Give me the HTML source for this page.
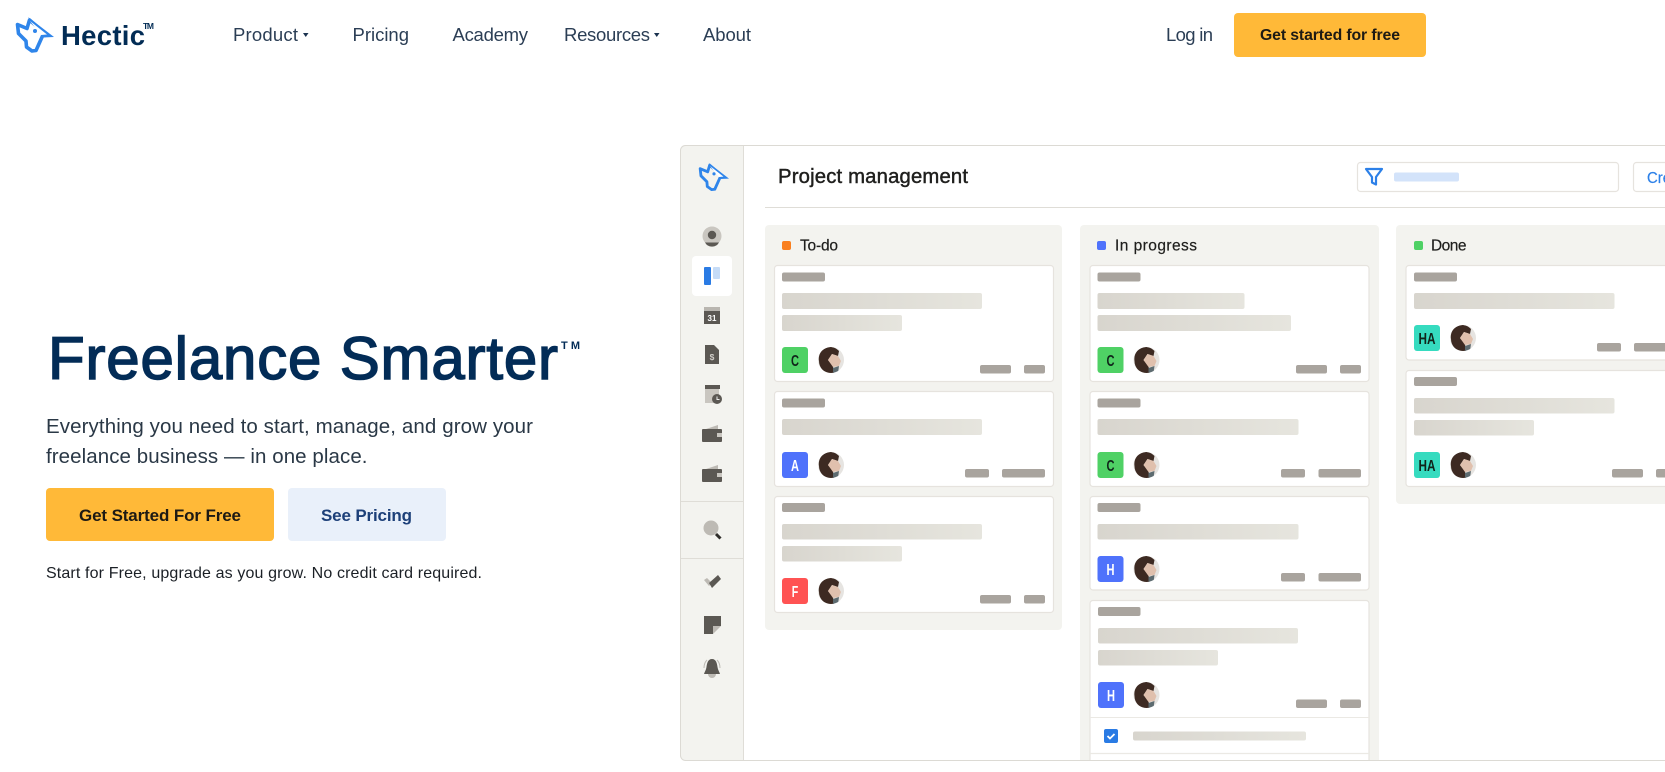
<!DOCTYPE html>
<html lang="en">
<head>
<meta charset="utf-8">
<title>Hectic - Freelance Smarter</title>
<style>
html,body{margin:0;padding:0;background:#fff;width:1665px;height:772px;overflow:hidden}
svg{display:block}
text{font-family:"Liberation Sans",sans-serif}
.nav{font-size:18.5px;fill:#2b3e55}
.l{fill:#a9a49e}
.b{fill:url(#g)}
.s{fill:#a9a49e}
.card{fill:#fff;stroke:#e6e3de;stroke-width:1.2}
.col{fill:#f3f3ef}
.line{stroke:#dfddd7;stroke-width:1}
.d{fill:#5b5853}
.m{fill:#bdbab4}
.t{font-size:15.5px;fill:#1f1f1d;stroke:#1f1f1d;stroke-width:.2}
.bd{font-size:16px;font-weight:700;text-anchor:middle}
</style>
</head>
<body>
<svg width="1665" height="772" viewBox="0 0 1665 772" xmlns="http://www.w3.org/2000/svg">
<defs>
<linearGradient id="g" x1="0" x2="1" y1="0" y2="0"><stop offset="0" stop-color="#d8d5ce"/><stop offset="1" stop-color="#e6e5de"/></linearGradient>
<clipPath id="frame"><rect x="680" y="145" width="985" height="615" rx="5"/></clipPath>
<clipPath id="av"><circle cx="13" cy="13" r="13"/></clipPath>
<symbol id="logo" viewBox="15 16 40 38" overflow="visible">
<path d="M17.5 24.5 L27 28.5 L29.5 20 L47 35 L42.5 36 L36 50.5 L32 51 L26.5 47 L26 41 L18.5 33.5 Z" fill="none" stroke="#2f85ea" stroke-width="3.6" stroke-linejoin="round"/>
<path d="M28 17 L54 37 L43 37.5 Z" fill="#2f85ea"/>
<path d="M30 21 L47 34.5 L41 35 Z" fill="#fff"/>
<circle cx="35" cy="31" r="2" fill="#2f85ea"/>
</symbol>
<g id="avatar" clip-path="url(#av)">
<rect width="26" height="26" fill="#e6e4e1"/>
<path d="M12 0 C4 1 0 7 1 14 C1 20 5 25 11 26 L16 26 L15 19 L10 13 L14 7 L20 9 L21 4 C18 1 15 0 12 0Z" fill="#3d2a22"/>
<path d="M10 13 L14 7 L20 9 L23 14 L21 19 L15 20Z" fill="#e0c0ad"/>
<path d="M15 21 L21 19 L20 26 L15 26Z" fill="#5d6b70"/>
</g>
</defs>

<!-- Header -->
<use href="#logo" x="15" y="16" width="40" height="38"/>
<text x="61" y="45" font-size="27.5" font-weight="700" fill="#022c55" textLength="84">Hectic</text>
<text x="143" y="29" font-size="8.5" font-weight="700" fill="#022c55" textLength="11">TM</text>
<text class="nav" x="233" y="41" textLength="65">Product</text>
<path d="M303 33 h5.5 l-2.75 4z" fill="#1b3350"/>
<text class="nav" x="352.5" y="41" textLength="56.5">Pricing</text>
<text class="nav" x="452.5" y="41" textLength="75.5">Academy</text>
<text class="nav" x="564" y="41" textLength="86">Resources</text>
<path d="M654 33 h5.5 l-2.75 4z" fill="#1b3350"/>
<text class="nav" x="703" y="41" textLength="48">About</text>
<text class="nav" x="1166" y="41" textLength="47">Log in</text>
<rect x="1234" y="13" width="192" height="44" rx="4" fill="#ffb938"/>
<text x="1260" y="40" font-size="15.8" font-weight="700" fill="#1d1a14" textLength="140">Get started for free</text>

<!-- Hero -->
<text x="48" y="379" font-size="60" fill="#032c57" stroke="#032c57" stroke-width="1.5" textLength="510">Freelance Smarter</text>
<text x="561" y="349" font-size="11" font-weight="700" fill="#032c57" textLength="19">TM</text>
<text x="46" y="433" font-size="20.5" fill="#2a3846" textLength="487">Everything you need to start, manage, and grow your</text>
<text x="46" y="463" font-size="20.5" fill="#2a3846" textLength="321.5">freelance business — in one place.</text>
<rect x="46" y="488" width="228" height="53" rx="4" fill="#ffb938"/>
<text x="79" y="521" font-size="17" font-weight="700" fill="#1d1a14" textLength="162">Get Started For Free</text>
<rect x="288" y="488" width="158" height="53" rx="4" fill="#e9f0fa"/>
<text x="321" y="521" font-size="17" font-weight="700" fill="#1d4079" textLength="91">See Pricing</text>
<text x="46" y="578" font-size="16" fill="#1b2026" textLength="436">Start for Free, upgrade as you grow. No credit card required.</text>

<!-- Mock -->
<g style="filter:blur(.35px)">
<g clip-path="url(#frame)">
<rect x="680" y="145" width="985" height="615" fill="#fff"/>
<rect x="680" y="145" width="64" height="615" fill="#f3f3ef"/>
<line x1="743.5" y1="145" x2="743.5" y2="760" class="line"/>
<line x1="680" y1="501.5" x2="743" y2="501.5" class="line"/>
<line x1="680" y1="558.5" x2="743" y2="558.5" class="line"/>

<!-- Sidebar -->
<use href="#logo" x="698" y="162" width="32" height="30"/>
<circle cx="712" cy="236" r="9.5" fill="#c9c6c0"/><circle cx="712" cy="235" r="4.2" class="d"/><path d="M705 242.5 h14 a8 8 0 0 1 -14 0z" class="d"/>
<rect x="692" y="256" width="40" height="40" rx="4" fill="#fff"/>
<rect x="704" y="267" width="7" height="18" rx="1" fill="#2a7be4"/><rect x="713" y="267" width="7" height="12" rx="1" fill="#c6dcf7"/>
<rect x="704" y="307" width="16" height="4" fill="#b9b6b0"/><rect x="704" y="311" width="16" height="13" class="d"/>
<text x="712" y="321" font-size="8" font-weight="700" fill="#fff" text-anchor="middle">31</text>
<path d="M705 345 h9 l5 5 v14 h-14z" class="d"/>
<text x="712" y="360" font-size="8.5" font-weight="700" fill="#cfcdc8" text-anchor="middle">$</text>
<rect x="705" y="385" width="15" height="4" class="d"/><rect x="705" y="389" width="14" height="14" fill="#c9c6c0"/><circle cx="717" cy="399" r="5" class="d"/><path d="M717 396.5 v3 h2.5" stroke="#eee" fill="none"/>
<path d="M706 429 l12 -4 v4z" class="m"/><rect x="702" y="429" width="20" height="13" rx="1" class="d"/><rect x="717" y="433" width="5" height="4" fill="#c9c6c0"/>
<path d="M706 469 l12 -4 v4z" class="m"/><rect x="702" y="469" width="20" height="13" rx="1" class="d"/><rect x="717" y="473" width="5" height="4" fill="#c9c6c0"/>
<circle cx="711" cy="528" r="7.5" class="m"/><path d="M716 534 L720.5 538.5" stroke="#2f2d2a" stroke-width="3"/>
<path d="M704 580 l3 -2 l5 5 l-3 3z" class="m"/><path d="M709 583 L718 575 L721 579 L712 588Z" class="d"/>
<path d="M704 616 h17 v10 h-8 v8 h-9z" class="d"/><path d="M713 626 h8 l-8 8z" class="m"/>
<path d="M712 659 c-4 0 -5 4 -5.5 8 c-.4 3 -2 5 -2.5 7 h16 c-.5 -2 -2.1 -4 -2.5 -7 c-.5 -4 -1.5 -8 -5.5 -8z" class="d"/><path d="M708 674 h8 a4 4 0 0 1 -8 0z" class="m"/><path d="M704 668 c0 -3 1 -6 3 -8 M720 668 c0 -3 -1 -6 -3 -8" stroke="#bdbab4" fill="none"/>

<!-- Top bar -->
<text x="778" y="183" font-size="20.3" fill="#1f1f1d" stroke="#1f1f1d" stroke-width=".45" textLength="190">Project management</text>
<line x1="765" y1="207.5" x2="1665" y2="207.5" class="line"/>
<rect x="1357.5" y="162.5" width="261" height="29" rx="3" fill="#fff" stroke="#e6e3de" stroke-width="1.2"/>
<path d="M1366 169 h16 l-6 8 v7.5 l-4 -2 v-5.5z" fill="none" stroke="#2c80e8" stroke-width="2.2" stroke-linejoin="round"/>
<rect x="1394" y="172.5" width="65" height="9" rx="2" fill="#d3e3fa"/>
<rect x="1633.5" y="162.5" width="60" height="29" rx="3" fill="#fff" stroke="#e6e3de" stroke-width="1.2"/>
<text x="1647" y="183" font-size="16" fill="#2c80e8" stroke="#2c80e8" stroke-width=".2" textLength="24" lengthAdjust="spacingAndGlyphs">Cre</text>

<!-- Column 1 -->
<rect class="col" x="765" y="225" width="297" height="405" rx="4"/>
<rect x="782" y="241" width="9" height="9" rx="2" fill="#f97f1e"/>
<text class="t" x="800" y="250.5" textLength="38">To-do</text>

<rect class="card" x="774.5" y="265.5" width="279" height="116" rx="3"/>
<rect class="l" x="782" y="272.5" width="43" height="9" rx="2"/>
<rect class="b" x="782" y="293" width="200" height="16" rx="2"/>
<rect class="b" x="782" y="315" width="120" height="16" rx="2"/>
<rect x="782" y="347" width="26" height="26" rx="3" fill="#4fd165"/><text class="bd" x="795" y="366" fill="#10241a" textLength="8" lengthAdjust="spacingAndGlyphs">C</text>
<use href="#avatar" x="818" y="347"/>
<rect class="s" x="980" y="365" width="31" height="8.5" rx="2"/><rect class="s" x="1024" y="365" width="21" height="8.5" rx="2"/>

<rect class="card" x="774.5" y="391.5" width="279" height="95" rx="3"/>
<rect class="l" x="782" y="398.5" width="43" height="9" rx="2"/>
<rect class="b" x="782" y="419" width="200" height="16" rx="2"/>
<rect x="782" y="452" width="26" height="26" rx="3" fill="#4f72fb"/><text class="bd" x="795" y="471" fill="#fff" textLength="8" lengthAdjust="spacingAndGlyphs">A</text>
<use href="#avatar" x="818" y="452"/>
<rect class="s" x="965" y="469" width="24" height="8.5" rx="2"/><rect class="s" x="1002" y="469" width="43" height="8.5" rx="2"/>

<rect class="card" x="774.5" y="496.5" width="279" height="116" rx="3"/>
<rect class="l" x="782" y="503" width="43" height="9" rx="2"/>
<rect class="b" x="782" y="524" width="200" height="15.5" rx="2"/>
<rect class="b" x="782" y="546" width="120" height="15.5" rx="2"/>
<rect x="782" y="578" width="26" height="26" rx="3" fill="#ff5353"/><text class="bd" x="795" y="597" fill="#fff" textLength="6.5" lengthAdjust="spacingAndGlyphs">F</text>
<use href="#avatar" x="818" y="578"/>
<rect class="s" x="980" y="595" width="31" height="8.5" rx="2"/><rect class="s" x="1024" y="595" width="21" height="8.5" rx="2"/>

<!-- Column 2 -->
<rect class="col" x="1080" y="225" width="299" height="545" rx="4"/>
<rect x="1097" y="241" width="9" height="9" rx="2" fill="#4f72fb"/>
<text class="t" x="1115" y="250.5" textLength="82">In progress</text>

<rect class="card" x="1090" y="265.5" width="279" height="116" rx="3"/>
<rect class="l" x="1097.5" y="272.5" width="43" height="9" rx="2"/>
<rect class="b" x="1097.5" y="293" width="147" height="16" rx="2"/>
<rect class="b" x="1097.5" y="315" width="193.5" height="16" rx="2"/>
<rect x="1097.5" y="347" width="26" height="26" rx="3" fill="#4fd165"/><text class="bd" x="1110.5" y="366" fill="#10241a" textLength="8" lengthAdjust="spacingAndGlyphs">C</text>
<use href="#avatar" x="1133.5" y="347"/>
<rect class="s" x="1296" y="365" width="31" height="8.5" rx="2"/><rect class="s" x="1340" y="365" width="21" height="8.5" rx="2"/>

<rect class="card" x="1090" y="391.5" width="279" height="95" rx="3"/>
<rect class="l" x="1097.5" y="398.5" width="43" height="9" rx="2"/>
<rect class="b" x="1097.5" y="419" width="201" height="16" rx="2"/>
<rect x="1097.5" y="452" width="26" height="26" rx="3" fill="#4fd165"/><text class="bd" x="1110.5" y="471" fill="#10241a" textLength="8" lengthAdjust="spacingAndGlyphs">C</text>
<use href="#avatar" x="1133.5" y="452"/>
<rect class="s" x="1281" y="469" width="24" height="8.5" rx="2"/><rect class="s" x="1318.5" y="469" width="42.5" height="8.5" rx="2"/>

<rect class="card" x="1090" y="496.5" width="279" height="93.5" rx="3"/>
<rect class="l" x="1097.5" y="503" width="43" height="9" rx="2"/>
<rect class="b" x="1097.5" y="524" width="201" height="15.5" rx="2"/>
<rect x="1097.5" y="556" width="26" height="26" rx="3" fill="#4f72fb"/><text class="bd" x="1110.5" y="575" fill="#fff" textLength="8" lengthAdjust="spacingAndGlyphs">H</text>
<use href="#avatar" x="1133.5" y="556"/>
<rect class="s" x="1281" y="573" width="24" height="8.5" rx="2"/><rect class="s" x="1318.5" y="573" width="42.5" height="8.5" rx="2"/>

<rect class="card" x="1090" y="600.5" width="279" height="170" rx="3"/>
<rect class="l" x="1098" y="607" width="42.5" height="9" rx="2"/>
<rect class="b" x="1098" y="628" width="200" height="15.5" rx="2"/>
<rect class="b" x="1098" y="650" width="120" height="15.5" rx="2"/>
<rect x="1098" y="682" width="26" height="26" rx="3" fill="#4f72fb"/><text class="bd" x="1111" y="701" fill="#fff" textLength="8" lengthAdjust="spacingAndGlyphs">H</text>
<use href="#avatar" x="1133.5" y="682"/>
<rect class="s" x="1296" y="699.5" width="31" height="8.5" rx="2"/><rect class="s" x="1340" y="699.5" width="21" height="8.5" rx="2"/>
<line x1="1090" y1="717.5" x2="1369" y2="717.5" stroke="#ebe9e4" stroke-width="1"/>
<rect x="1104" y="729" width="14" height="14" rx="2" fill="#2a7be4"/><path d="M1107.5 736 l2.5 2.5 l4.5 -4.5" fill="none" stroke="#fff" stroke-width="1.8"/>
<rect class="b" x="1133" y="731.5" width="173" height="9" rx="2"/>
<line x1="1090" y1="753.5" x2="1369" y2="753.5" stroke="#ebe9e4" stroke-width="1.2"/>

<!-- Column 3 -->
<rect class="col" x="1396" y="225" width="290" height="279" rx="4"/>
<rect x="1414" y="241" width="9" height="9" rx="2" fill="#4fd165"/>
<text class="t" x="1431" y="250.5" textLength="35.5">Done</text>

<rect class="card" x="1406" y="265.5" width="280" height="94.5" rx="3"/>
<rect class="l" x="1414" y="272.5" width="43" height="9" rx="2"/>
<rect class="b" x="1414" y="293" width="200.5" height="16" rx="2"/>
<rect x="1414" y="325" width="26" height="26" rx="3" fill="#36dbbf"/><text class="bd" x="1427" y="344" fill="#10241a" textLength="17" lengthAdjust="spacingAndGlyphs">HA</text>
<use href="#avatar" x="1450" y="325"/>
<rect class="s" x="1597" y="343" width="24" height="8.5" rx="2"/><rect class="s" x="1634" y="343" width="40" height="8.5" rx="2"/>

<rect class="card" x="1406" y="370.5" width="280" height="116" rx="3"/>
<rect class="l" x="1414" y="377" width="43" height="9" rx="2"/>
<rect class="b" x="1414" y="398" width="200.5" height="15.5" rx="2"/>
<rect class="b" x="1414" y="420" width="120" height="15.5" rx="2"/>
<rect x="1414" y="452" width="26" height="26" rx="3" fill="#36dbbf"/><text class="bd" x="1427" y="471" fill="#10241a" textLength="17" lengthAdjust="spacingAndGlyphs">HA</text>
<use href="#avatar" x="1450" y="452"/>
<rect class="s" x="1612" y="469" width="31" height="8.5" rx="2"/><rect class="s" x="1656" y="469" width="20" height="8.5" rx="2"/>
</g>
<rect x="680.5" y="145.5" width="1000" height="615" rx="5" fill="none" stroke="#dcdad4" stroke-width="1"/>
</g>
</svg>
</body>
</html>
